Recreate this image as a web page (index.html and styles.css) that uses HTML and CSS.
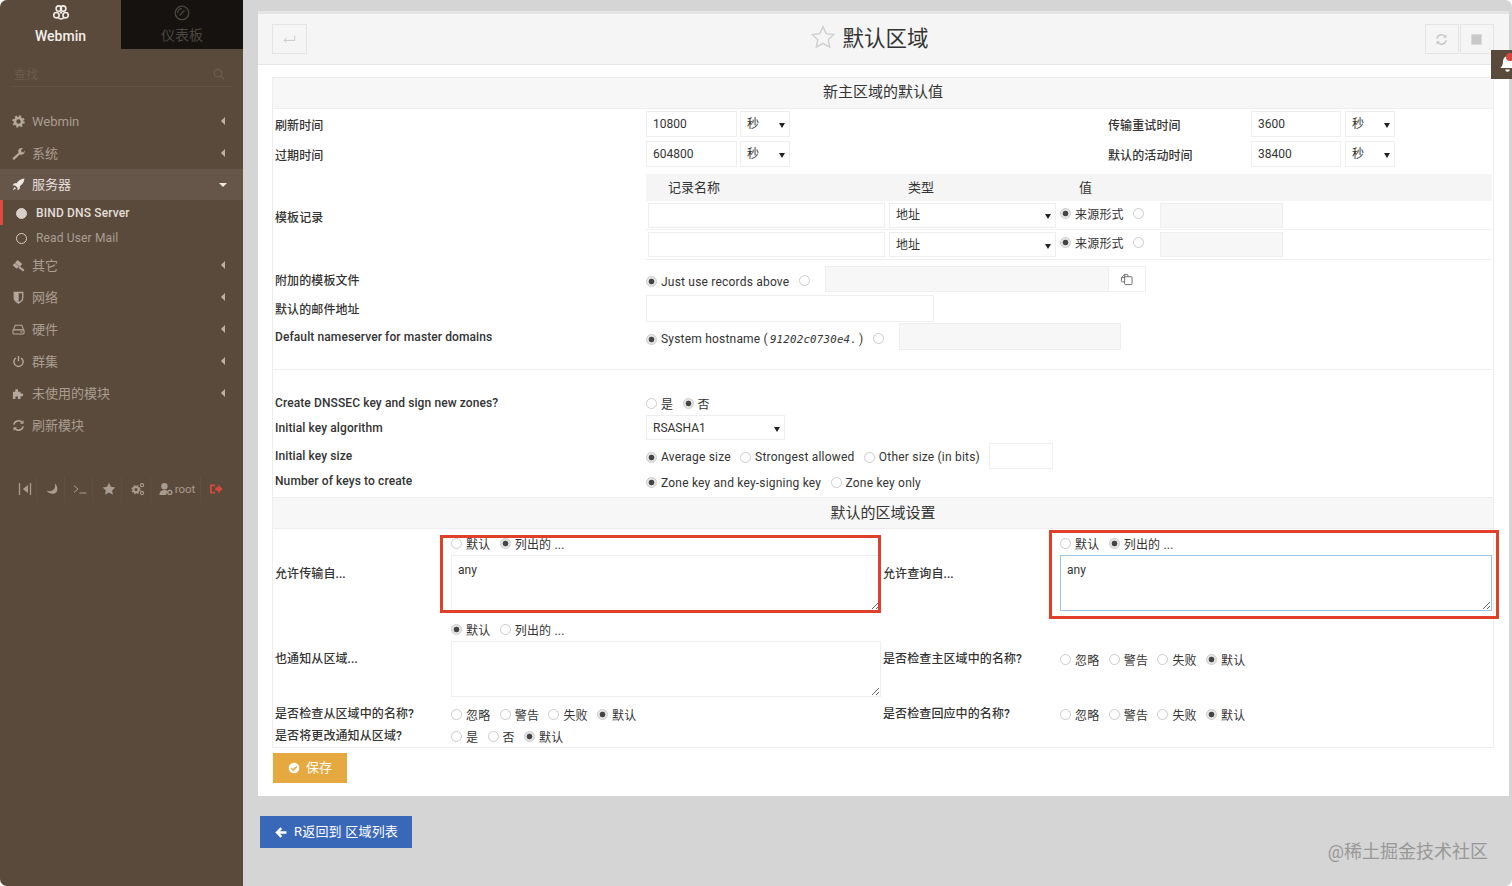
FILE: index.html
```html
<!DOCTYPE html>
<html>
  <head>
    <meta charset="UTF-8">
    <title>默认区域</title>
    <link rel="stylesheet" href="styles.css">
  </head>
  <body>
    <div class="app">
      <!-- Left menu -->
      <aside class="sidebar">
        <div class="tabs">
          <div class="tab tab-on">
            <svg class="tab-icon" viewBox="0 0 16 16" fill="none" stroke="currentColor" stroke-width="1.6"><circle cx="5.8" cy="3.600" r="2.700"/><circle cx="10.200" cy="3.600" r="2.700"/><circle cx="3.400" cy="10.200" r="2.700"/><circle cx="12.600" cy="10.200" r="2.700"/><path d="M5 12.400c1.600 2.200 4.400 2.200 6 0"/><path d="M6.800 7.800h2.400"/></svg>
            <span>Webmin</span>
          </div>
          <div class="tab tab-off">
            <svg class="tab-icon" viewBox="0 0 16 16" fill="none" stroke="currentColor" stroke-width="1.3"><circle cx="8" cy="8" r="6.800"/><path d="M5.500 10.500l5-5M8 3.600a4.400 4.400 0 0 0-4.400 4.400"/></svg>
            <span>仪表板</span>
          </div>
        </div>
        <div class="search">
          <span>查找</span>
          <svg class="search-icon" viewBox="0 0 12 12" fill="none" stroke="currentColor" stroke-width="1.4"><circle cx="5" cy="5" r="3.800"/><path d="M8 8l3.200 3.200"/></svg>
        </div>
        <nav class="nav">
          <div class="nav-item">
            <svg class="nav-icon" viewBox="0 0 14 14"><circle cx="7" cy="7" r="3.800" fill="none" stroke="currentColor" stroke-width="2.800"/><circle cx="7" cy="7" r="5.800" fill="none" stroke="currentColor" stroke-width="1.800" stroke-dasharray="2.200 2.350"/></svg>
            <span class="nav-latin">Webmin</span><i class="caret"></i>
          </div>
          <div class="nav-item">
            <svg class="nav-icon" viewBox="0 0 14 14" fill="currentColor"><path d="M1 11.600L7 6.200A3.600 3.600 0 0 1 11.800 1.400L9.600 3.600l.8 1.800 1.800.6 1.400-2.200A3.700 3.700 0 0 1 8.400 8L3 13.200a1.200 1.200 0 0 1-2-1.600z"/></svg>
            <span>系统</span><i class="caret"></i>
          </div>
          <div class="nav-item nav-on">
            <svg class="nav-icon" viewBox="0 0 14 14" fill="currentColor"><path d="M13.400.6C9.600.8 7 2.800 5 5.600H2.400L.6 8h2.800l2.600 2.600v2.800L8.400 11.600V9c2.800-2 4.800-4.600 5-8.400zM2.600 9.600L.8 13.200l3.600-1.800z"/></svg>
            <span>服务器</span><i class="caret caret-down"></i>
          </div>
          <div class="sub-item sub-on"><i class="dot dot-full"></i><span>BIND DNS Server</span></div>
          <div class="sub-item sub-next"><i class="dot"></i><span>Read User Mail</span></div>
          <div class="nav-item">
            <svg class="nav-icon" viewBox="0 0 14 14" fill="currentColor"><path d="M6 1l5 4.400-2.600 3L3.400 4zM.8 6.600L3.200 4.400 7.400 8.200 5 10.400zM8.200 7.800l5.200 3.800-1.400 1.800-5.200-4z"/></svg>
            <span>其它</span><i class="caret"></i>
          </div>
          <div class="nav-item">
            <svg class="nav-icon" viewBox="0 0 14 14"><path d="M2.400 1.600h9.200v5.800c0 2.600-2.200 4.400-4.600 5.600-2.400-1.200-4.600-3-4.600-5.600z" fill="none" stroke="currentColor" stroke-width="1.400"/><path d="M3 2.200h4.200v10C4.800 11.200 3 9.600 3 7.400z" fill="currentColor"/></svg>
            <span>网络</span><i class="caret"></i>
          </div>
          <div class="nav-item">
            <svg class="nav-icon" viewBox="0 0 14 14" fill="none" stroke="currentColor" stroke-width="1.100"><path d="M1.600 7.400L3.400 2.400h7.200l1.800 5"/><rect x="1" y="7.400" width="12" height="4.400" rx="1"/><path d="M9 9.600h2.400"/></svg>
            <span>硬件</span><i class="caret"></i>
          </div>
          <div class="nav-item">
            <svg class="nav-icon" viewBox="0 0 14 14" fill="none" stroke="currentColor" stroke-width="1.500"><path d="M4.200 3.200a5 5 0 1 0 5.600 0M7 1v5.600"/></svg>
            <span>群集</span><i class="caret"></i>
          </div>
          <div class="nav-item">
            <svg class="nav-icon" viewBox="0 0 14 14" fill="currentColor"><path d="M1 5h2.600V2.400h2.800V5h2.800v2h1.400a1.500 1.500 0 1 1 0 3H9.200v3H6.400v-1.600a1.400 1.400 0 0 0-2.800 0V13H1z"/></svg>
            <span>未使用的模块</span><i class="caret"></i>
          </div>
          <div class="nav-item">
            <svg class="nav-icon" viewBox="0 0 14 14" fill="none" stroke="currentColor" stroke-width="1.600"><path d="M2 6a5 5 0 0 1 8.800-2.200M12 8a5 5 0 0 1-8.800 2.200"/><path d="M12.400 1.400v3.800H8.600z" fill="currentColor" stroke="none"/><path d="M1.600 12.600V8.800h3.800z" fill="currentColor" stroke="none"/></svg>
            <span>刷新模块</span>
          </div>
        </nav>
        <div class="tools">
          <div class="tool tool-a"><svg viewBox="0 0 14 14" fill="none" stroke="currentColor" stroke-width="1.300"><path d="M1.500 1v12M12.500 1v12"/><path d="M10 3v8L4.800 7z" fill="currentColor" stroke="none"/></svg></div>
          <div class="tool tool-b"><svg viewBox="0 0 14 14" fill="currentColor"><path d="M9.600 1.600c1.800 5-1.800 8.800-7.800 7.200 2 4 10.600 4.600 10.600-1.800 0-2.400-1-4.200-2.800-5.400z"/></svg></div>
          <div class="tool tool-b"><svg viewBox="0 0 14 14" fill="none" stroke="currentColor" stroke-width="1"><path d="M1 3.600L5 7l-4 3.400M6.400 11h7"/></svg></div>
          <div class="tool tool-c"><svg viewBox="0 0 14 14" fill="currentColor"><path d="M7 .8l1.900 4 4.400.6-3.200 3 .8 4.400L7 10.600l-3.900 2.200.8-4.400-3.200-3 4.400-.6z"/></svg></div>
          <div class="tool tool-d"><svg viewBox="0 0 14 14" fill="none" stroke="currentColor"><circle cx="5" cy="7.600" r="2.600" stroke-width="2"/><circle cx="5" cy="7.600" r="4" stroke-width="1.200" stroke-dasharray="1.600 1.600"/><circle cx="11" cy="3.200" r="1.600" stroke-width="1.100"/><circle cx="11" cy="11" r="1.600" stroke-width="1.100"/></svg></div>
          <div class="tool tool-e"><svg viewBox="0 0 14 14" fill="currentColor"><circle cx="5.400" cy="4.200" r="3.200"/><path d="M.4 13c0-3.400 2-5 5-5 1.400 0 2.400.3 3.200.9L7 13z"/><circle cx="10.800" cy="10.400" r="2" fill="none" stroke="currentColor" stroke-width="1.400"/></svg><span>root</span></div>
          <div class="tool tool-out"><svg viewBox="0 0 14 14" fill="currentColor"><path d="M1 2.400h5v1.800H2.800v5.600H6v1.800H1z"/><path d="M6.400 5.200h2.800V2.600L13.600 7l-4.400 4.400V8.800H6.400z"/></svg></div>
        </div>
      </aside>

      <main class="main">
        <div class="panel">
          <div class="panel-head">
            <div class="head-btn"><svg viewBox="0 0 14 14" fill="none" stroke="currentColor" stroke-width="1"><path d="M12.600 3v5H1.200M4 5.200L1.200 8 4 10.800"/></svg></div>
            <h1 class="title">
              <svg class="title-star" viewBox="0 0 24 24" fill="none" stroke="#cfcfcf" stroke-width="1.400"><path d="M12 1.600l3.200 7 7.600.9-5.600 5.200 1.500 7.500-6.700-3.800-6.700 3.800 1.500-7.500L1.200 9.500l7.600-.9z"/></svg>
              默认区域
            </h1>
            <div class="head-right">
              <div class="head-btn head-btn-sm"><svg viewBox="0 0 14 14" fill="none" stroke="currentColor" stroke-width="1.700"><path d="M2 6a5 5 0 0 1 8.800-2.200M12 8a5 5 0 0 1-8.800 2.200"/><path d="M12.400 1.400v3.800H8.600z" fill="currentColor" stroke="none"/><path d="M1.600 12.600V8.800h3.800z" fill="currentColor" stroke="none"/></svg></div>
              <div class="head-btn head-btn-sm"><svg viewBox="0 0 14 14" fill="currentColor"><rect x="1.500" y="1.500" width="11" height="11"/></svg></div>
            </div>
          </div>

          <form class="box" onsubmit="return false;">
            <div class="box-head">新主区域的默认值</div>

            <div class="times">
              <div class="lbl">刷新时间</div>
              <div class="line">
                <input class="in in-num" type="text" value="10800">
                <span class="sel sel-unit"><select><option>秒</option></select></span>
              </div>
              <div class="lbl">传输重试时间</div>
              <div class="line">
                <input class="in in-num2" type="text" value="3600">
                <span class="sel sel-unit"><select><option>秒</option></select></span>
              </div>
              <div class="lbl">过期时间</div>
              <div class="line">
                <input class="in in-num" type="text" value="604800">
                <span class="sel sel-unit"><select><option>秒</option></select></span>
              </div>
              <div class="lbl">默认的活动时间</div>
              <div class="line">
                <input class="in in-num2" type="text" value="38400">
                <span class="sel sel-unit"><select><option>秒</option></select></span>
              </div>
            </div>

            <div class="row row-tpl">
              <div class="lbl">模板记录</div>
              <div class="rec">
                <div class="rec-row rec-head"><div>记录名称</div><div>类型</div><div>值</div></div>
                <div class="rec-row">
                  <input class="in in-name" type="text">
                  <span class="sel sel-type"><select><option>地址</option></select></span>
                  <div class="line opts">
                    <label class="opt"><input type="radio" name="v1" checked>来源形式</label>
                    <label class="opt"><input type="radio" name="v1"></label>
                    <input class="in in-off in-val" type="text" disabled>
                  </div>
                </div>
                <div class="rec-row">
                  <input class="in in-name" type="text">
                  <span class="sel sel-type"><select><option>地址</option></select></span>
                  <div class="line opts">
                    <label class="opt"><input type="radio" name="v2" checked>来源形式</label>
                    <label class="opt"><input type="radio" name="v2"></label>
                    <input class="in in-off in-val" type="text" disabled>
                  </div>
                </div>
              </div>
            </div>

            <div class="row row-file">
              <div class="lbl">附加的模板文件</div>
              <div class="line opts">
                <label class="opt"><input type="radio" name="tf" checked>Just use records above</label>
                <label class="opt"><input type="radio" name="tf"></label>
                <div class="line file-group">
                  <input class="in in-off in-file" type="text" disabled>
                  <div class="file-btn"><svg viewBox="0 0 14 14" fill="none" stroke="#666" stroke-width="1"><rect x="5" y="4" width="8" height="8.500" rx="1"/><path d="M5 9.500H2.500a1 1 0 0 1-1-1V5L5 1.500h2.500a1 1 0 0 1 1 1V4M5 1.500V5H1.500"/></svg></div>
                </div>
              </div>
            </div>

            <div class="row row-mail">
              <div class="lbl">默认的邮件地址</div>
              <div class="line"><input class="in in-mail" type="text"></div>
            </div>

            <div class="row row-ns">
              <div class="lbl">Default nameserver for master domains</div>
              <div class="line opts">
                <label class="opt"><input type="radio" name="ns" checked><span>System hostname (<em class="mono">91202c0730e4.</em>)</span></label>
                <label class="opt"><input type="radio" name="ns"></label>
                <input class="in in-off in-host" type="text" disabled>
              </div>
            </div>

            <hr class="rule">

            <div class="row row-sign">
              <div class="lbl">Create DNSSEC key and sign new zones?</div>
              <div class="line opts">
                <label class="opt"><input type="radio" name="sg">是</label>
                <label class="opt"><input type="radio" name="sg" checked>否</label>
              </div>
            </div>
            <div class="row row-algo">
              <div class="lbl">Initial key algorithm</div>
              <span class="sel sel-algo"><select><option>RSASHA1</option></select></span>
            </div>
            <div class="row row-size">
              <div class="lbl">Initial key size</div>
              <div class="line opts">
                <label class="opt"><input type="radio" name="ks" checked>Average size</label>
                <label class="opt"><input type="radio" name="ks">Strongest allowed</label>
                <label class="opt"><input type="radio" name="ks">Other size (in bits)</label>
                <input class="in in-bits" type="text">
              </div>
            </div>
            <div class="row row-keys">
              <div class="lbl">Number of keys to create</div>
              <div class="line opts">
                <label class="opt"><input type="radio" name="nk" checked>Zone key and key-signing key</label>
                <label class="opt"><input type="radio" name="nk">Zone key only</label>
              </div>
            </div>

            <div class="zone">
              <div class="box-head box-head-2">默认的区域设置</div>
              <div class="zone-grid">
                <div class="lbl">允许传输自...</div>
                <div class="stack stack-top">
                  <div class="line opts">
                    <label class="opt"><input type="radio" name="at">默认</label>
                    <label class="opt"><input type="radio" name="at" checked>列出的 ...</label>
                  </div>
                  <textarea class="area">any</textarea>
                </div>
                <div class="lbl">允许查询自...</div>
                <div class="stack stack-top">
                  <div class="line opts">
                    <label class="opt"><input type="radio" name="aq">默认</label>
                    <label class="opt"><input type="radio" name="aq" checked>列出的 ...</label>
                  </div>
                  <textarea class="area area-focus">any</textarea>
                </div>

                <div class="lbl lbl-up">也通知从区域...</div>
                <div class="stack">
                  <div class="line opts">
                    <label class="opt"><input type="radio" name="an" checked>默认</label>
                    <label class="opt"><input type="radio" name="an">列出的 ...</label>
                  </div>
                  <textarea class="area"></textarea>
                </div>
                <div class="lbl lbl-up">是否检查主区域中的名称?</div>
                <div class="line opts opts-up">
                  <label class="opt"><input type="radio" name="cm">忽略</label>
                  <label class="opt"><input type="radio" name="cm">警告</label>
                  <label class="opt"><input type="radio" name="cm">失败</label>
                  <label class="opt"><input type="radio" name="cm" checked>默认</label>
                </div>

                <div class="lbl">是否检查从区域中的名称?</div>
                <div class="line opts">
                  <label class="opt"><input type="radio" name="cs">忽略</label>
                  <label class="opt"><input type="radio" name="cs">警告</label>
                  <label class="opt"><input type="radio" name="cs">失败</label>
                  <label class="opt"><input type="radio" name="cs" checked>默认</label>
                </div>
                <div class="lbl">是否检查回应中的名称?</div>
                <div class="line opts">
                  <label class="opt"><input type="radio" name="cr">忽略</label>
                  <label class="opt"><input type="radio" name="cr">警告</label>
                  <label class="opt"><input type="radio" name="cr">失败</label>
                  <label class="opt"><input type="radio" name="cr" checked>默认</label>
                </div>

                <div class="lbl">是否将更改通知从区域?</div>
                <div class="line opts">
                  <label class="opt"><input type="radio" name="nz">是</label>
                  <label class="opt"><input type="radio" name="nz">否</label>
                  <label class="opt"><input type="radio" name="nz" checked>默认</label>
                </div>
              </div>
              <!-- red marks over the screenshot -->
              <div class="mark mark-left"></div>
              <div class="mark mark-right"></div>
            </div>
          </form>

          <button class="btn btn-save" type="button">
            <svg viewBox="0 0 14 14"><circle cx="7" cy="7" r="6.200" fill="#fff"/><path d="M3.800 7.200l2.300 2.300 4.200-4.300" fill="none" stroke="#e6a93f" stroke-width="1.800"/></svg>
            <span>保存</span>
          </button>
        </div>

        <button class="btn btn-back" type="button">
          <svg viewBox="0 0 14 14" fill="#fff"><path d="M7 1.400l1.800 1.800-2.400 2.400h7v2.800h-7l2.400 2.400L7 12.600 1.400 7z"/></svg>
          <span>R返回到 区域列表</span>
        </button>
      </main>

      <div class="bell">
        <svg viewBox="0 0 20 20" fill="#fff"><path d="M9 1.500c-3 .4-4.500 2.600-4.500 5.500 0 4-1.500 6-3 7.500h17c-1.500-1.500-3-3.500-3-7.500 0-2.900-1.500-5.100-4.500-5.500z"/><path d="M7 16h5a2.500 2.500 0 0 1-5 0z"/></svg>
        <i class="bell-dot"></i>
      </div>
      <div class="watermark">@稀土掘金技术社区</div>
    </div>
  </body>
</html>
```

FILE: styles.css
```css
/* Page frame */
html, body {
  margin: 0;
  height: 100%;
  background-color: #fff;
}

body {
  font-family: Roboto, "Noto Sans CJK SC", sans-serif;
  font-size: 12px;
  color: #333;
  overflow: hidden;
}

.app {
  position: relative;
  display: flex;
  width: 1512px;
  height: 886px;
  border-radius: 7px;
  overflow: hidden;
  background-color: #d5d5d5;
}

/* Left menu */
.sidebar {
  width: 243px;
  flex: none;
  background-color: #5a4a3c;
  color: #aa9e92;
  font-size: 14px;
}

.tabs {
  display: flex;
  height: 49px;
}

.tab {
  width: 121px;
  display: flex;
  flex-direction: column;
  align-items: center;
  padding-top: 5px;
  box-sizing: border-box;
  font-weight: 500;
}

.tab-on {
  color: #f2eeea;
}

.tab-on span {
  padding-top: 2px;
}

.tab-off {
  width: 122px;
  background-color: #15120f;
  color: #4b4640;
  font-weight: 400;
}

.tab-off span {
  margin-top: -2px;
}

.tab-icon {
  width: 16px;
  height: 16px;
  margin-bottom: 5px;
}

.search {
  display: flex;
  justify-content: space-between;
  align-items: flex-end;
  height: 38px;
  margin: 0 10px;
  padding: 0 8px 4px 4px;
  box-sizing: border-box;
  border-bottom: 1px solid #625244;
  color: #6c5c4e;
  font-size: 12px;
}

.search-icon {
  width: 12px;
  height: 12px;
  margin-bottom: 2px;
}

.nav {
  margin-top: 18px;
}

.nav-item {
  display: flex;
  align-items: center;
  height: 32px;
  padding: 0 18px 0 12px;
  box-sizing: border-box;
}

.nav-item span {
  margin-left: 7px;
  padding-bottom: 2px;
  flex: 1;
  font-size: 13px;
}

.nav-item .nav-latin {
  padding-bottom: 0;
}

.nav-icon {
  width: 13px;
  height: 13px;
  color: #b5a99d;
}

.nav-on {
  height: 31px;
  background-color: #66564a;
  color: #e4ded8;
}

.nav-on .nav-icon {
  color: #eee8e2;
}

.caret {
  width: 0;
  height: 0;
  border-top: 4px solid transparent;
  border-bottom: 4px solid transparent;
  border-right: 4px solid #bcb2a8;
}

.caret-down {
  border-top: 4px solid #eee8e2;
  border-bottom: none;
  border-left: 4px solid transparent;
  border-right: 4px solid transparent;
  margin-right: -2px;
}

.sub-item {
  display: flex;
  align-items: center;
  height: 25px;
  padding-left: 16px;
  box-sizing: border-box;
  font-size: 12px;
  letter-spacing: 0.150px;
}

.sub-next {
  height: 24px;
  padding-top: 2px;
}

.sub-on {
  border-left: 3px solid #e0493c;
  padding-left: 13px;
  padding-top: 1px;
  color: #e4ded8;
  font-weight: 500;
}

.dot {
  width: 9px;
  height: 9px;
  margin-right: 9px;
  border: 1px solid #d8d0c8;
  border-radius: 50%;
}

.dot-full {
  background-color: #d8d0c8;
}

.tools {
  display: flex;
  align-items: center;
  height: 26px;
  margin: 35px 0 0 13px;
  color: #a89c90;
}

.tool {
  display: flex;
  align-items: center;
  justify-content: center;
  height: 26px;
  margin-right: 3px;
  box-sizing: border-box;
  border-right: 1px solid #5f4f42;
  font-size: 11px;
}

.tool svg {
  width: 14px;
  height: 14px;
}

.tool-a { width: 24px; }
.tool-b { width: 25px; }
.tool-c { width: 26px; }
.tool-d { width: 26px; }
.tool-e { width: 47px; }
.tool-e span { margin-left: 2px; font-size: 11.500px; }
.tool-out { width: 24px; color: #d8473c; border-right: none; }

/* Main column */
.main {
  flex: 1;
  padding: 11px 3px 0 15px;
}

.panel {
  height: 785px;
  box-sizing: border-box;
  border-top: 3px solid #e4e4e4;
  background-color: #fff;
}

.panel-head {
  position: relative;
  display: flex;
  justify-content: space-between;
  align-items: center;
  height: 51px;
  padding: 0 15px 0 14px;
  box-sizing: border-box;
  background-color: #f5f5f5;
  border-bottom: 1px solid #e6e6e6;
}

.head-btn {
  display: flex;
  align-items: center;
  justify-content: center;
  width: 35px;
  height: 30px;
  box-sizing: border-box;
  border: 1px solid #e4e4e4;
  color: #c8c8c8;
}

.head-btn svg {
  width: 13px;
  height: 13px;
}

.head-btn-sm {
  width: 34px;
}

.head-right {
  display: flex;
  gap: 1px;
}

.title {
  display: flex;
  align-items: center;
  gap: 7px;
  margin: 0 0 5px 0;
  padding-left: 8px;
  font-size: 21.500px;
  font-weight: 400;
  color: #333;
}

.title-star {
  width: 24px;
  height: 24px;
}

/* The form box */
.box {
  margin: 12px 15px 0 14px;
  border: 1px solid #ededed;
  height: 671px;
  box-sizing: border-box;
}

.box-head {
  height: 31px;
  line-height: 29px;
  text-align: center;
  font-size: 15px;
  background-color: #f7f7f7;
  border-bottom: 1px solid #eee;
  box-sizing: border-box;
}

.box-head-2 {
  height: 32px;
  line-height: 31px;
  border-top: 1px solid #eee;
}

.lbl {
  font-weight: 500;
  color: #333;
  white-space: nowrap;
  letter-spacing: 0.100px;
}

.line {
  display: flex;
  align-items: center;
}

.row {
  display: grid;
  grid-template-columns: 371px 1fr;
  align-items: center;
  padding-left: 2px;
}

.times {
  display: grid;
  grid-template-columns: 371px 462px 143px 1fr;
  grid-auto-rows: 30px;
  align-items: center;
  padding-left: 2px;
}

.row-tpl {
  margin-top: 5px;
  height: 85px;
}

.row-tpl .lbl {
  padding-bottom: 2px;
}

.row-file {
  margin-top: 6px;
  height: 28px;
}

.row-mail {
  margin-top: 2px;
  height: 27px;
}

.row-ns {
  margin-top: 1px;
  height: 27px;
}

.row-sign {
  height: 24px;
  margin-top: 21px;
}

.row-algo {
  height: 25px;
}

.row-size {
  height: 27px;
  margin-top: 2px;
}

.row-keys {
  height: 27px;
}

.row-keys .lbl {
  padding-bottom: 4px;
}

.row-size .opt {
  padding-top: 3px;
}

.row-ns .opt:first-child,
.row-file .opt:first-child {
  padding-top: 5px;
}

.row-ns .opt:nth-child(2),
.row-file .opt:nth-child(2) {
  padding-top: 3px;
}

.rule {
  margin: 19px 1px 0 0;
  border: none;
  border-top: 1px solid #eee;
}

/* Inputs */
.in, .sel select, .area {
  font-family: inherit;
  font-size: 12px;
  color: #333;
  background-color: #fff;
  border: 1px solid #eee;
  border-radius: 0;
  box-sizing: border-box;
  outline: none;
}

.in {
  height: 26px;
  padding: 0 6px;
  display: block;
}

.in-num { width: 91px; margin-right: 3px; }
.in-num2 { width: 90px; margin-right: 4px; }
.in-name { width: 237px; height: 25px; }
.in-off { background-color: #f7f7f7; }
.in-val { width: 123px; height: 25px; }
.in-file { width: 284px; }
.in-mail { width: 288px; height: 27px; }
.in-host { width: 222px; margin-left: 6px; height: 27px; }
.in-bits { width: 64px; }

.file-group {
  margin-left: 6px;
}

.file-btn {
  display: flex;
  align-items: center;
  justify-content: center;
  width: 37px;
  height: 26px;
  box-sizing: border-box;
  border: 1px solid #eee;
  border-left: none;
}

.file-btn svg {
  width: 13px;
  height: 13px;
}

.sel {
  position: relative;
  display: inline-block;
}

.sel select {
  appearance: none;
  -webkit-appearance: none;
  display: block;
  width: 100%;
  height: 100%;
  padding: 0 6px;
}

.sel:after {
  content: "";
  position: absolute;
  right: 5px;
  top: 50%;
  margin-top: -1px;
  border-top: 5px solid #222;
  border-left: 3px solid transparent;
  border-right: 3px solid transparent;
}

.sel-unit { width: 50px; height: 26px; }
.sel-type { width: 167px; height: 25px; }
.sel-algo { width: 139px; height: 25px; }

/* Record table */
.rec {
  margin-right: 1px;
  border-bottom: 1px solid #eee;
}

.rec-row {
  display: grid;
  grid-template-columns: 241px 171px 1fr;
  align-items: center;
  height: 29px;
  padding-left: 2px;
  box-sizing: border-box;
  border-bottom: 1px solid #f0f0f0;
}

.rec-row:last-child {
  border-bottom: none;
}

.rec-head {
  height: 27px;
  background-color: #f5f5f5;
  font-size: 13px;
  border-bottom: none;
}

.rec-head div {
  padding: 0 0 2px 19px;
}

.rec-head div:first-child {
  padding-left: 20px;
}

.rec .opt {
  padding-bottom: 4px;
}

.rec .in-val {
  margin-left: 7px;
}

/* Radio groups */
.opts {
  gap: 9.300px;
  white-space: nowrap;
}

.opts-up {
  padding-bottom: 4px;
}

.opt {
  display: inline-flex;
  align-items: center;
  gap: 4px;
  letter-spacing: 0.200px;
}

.opt input {
  appearance: none;
  -webkit-appearance: none;
  width: 11px;
  height: 11px;
  margin: 0;
  flex: none;
  border: 1px solid #ccc;
  border-radius: 50%;
  background-color: #fff;
}

.opt input:checked {
  background: radial-gradient(circle, #444 0, #444 2.500px, #e6e6e6 3.200px);
}

.mono {
  font-family: "DejaVu Sans Mono", monospace;
  font-size: 10.800px;
  margin: 0 2px;
}

/* Lower section */
.zone {
  position: relative;
  margin-top: 1px;
}

.zone-grid {
  display: grid;
  grid-template-columns: 176px 432px 177px 1fr;
  grid-template-rows: 91px 83px 22px 23px;
  align-items: center;
  padding-left: 2px;
}

.zone-grid .lbl {
  padding-bottom: 4px;
}

.zone-grid .lbl-up {
  padding-bottom: 8px;
}

.stack {
  display: flex;
  flex-direction: column;
  align-self: start;
}

.stack .opts {
  height: 19px;
}

.stack-top {
  padding-top: 5px;
}

.area {
  display: block;
  width: 430px;
  height: 56px;
  margin-top: 2px;
  padding: 6px;
  line-height: 16px;
}

.area-focus {
  width: 432px;
  border-color: #9cc0e0;
}

.mark {
  position: absolute;
  box-sizing: border-box;
  border: 3px solid #e0402a;
}

.mark-left {
  left: 167px;
  top: 38px;
  width: 441px;
  height: 78px;
}

.mark-right {
  left: 776px;
  top: 33px;
  width: 450px;
  height: 89px;
}

/* Buttons */
.btn {
  display: flex;
  align-items: center;
  border: none;
  color: #fff;
  font-family: inherit;
}

.btn-save {
  width: 74px;
  height: 30px;
  margin: 5px 0 0 15px;
  padding: 0 0 0 15px;
  gap: 6px;
  background-color: #e6a93f;
  font-size: 13px;
}

.btn-save span {
  padding-bottom: 3px;
}

.btn-save svg {
  width: 12px;
  height: 12px;
}

.btn-back {
  width: 152px;
  height: 32px;
  margin: 20px 0 0 2px;
  padding: 0 0 0 14px;
  gap: 7px;
  background-color: #3a68b8;
  font-size: 13px;
}

.btn-back span {
  padding-bottom: 3px;
  letter-spacing: 0.200px;
}

.btn-back svg {
  width: 13px;
  height: 13px;
}

/* Bell tab and watermark sit over the page */
.bell {
  position: absolute;
  right: 0;
  top: 50px;
  width: 21px;
  height: 29px;
  overflow: hidden;
  background-color: #5a4a3c;
}

.bell svg {
  position: absolute;
  left: 8px;
  top: 5px;
  width: 18px;
  height: 18px;
}

.bell-dot {
  position: absolute;
  left: 15px;
  top: 3px;
  width: 8px;
  height: 8px;
  border-radius: 50%;
  background-color: #d8473c;
}

.watermark {
  position: absolute;
  right: 24px;
  bottom: 23px;
  font-size: 18px;
  color: #989898;
}
```
